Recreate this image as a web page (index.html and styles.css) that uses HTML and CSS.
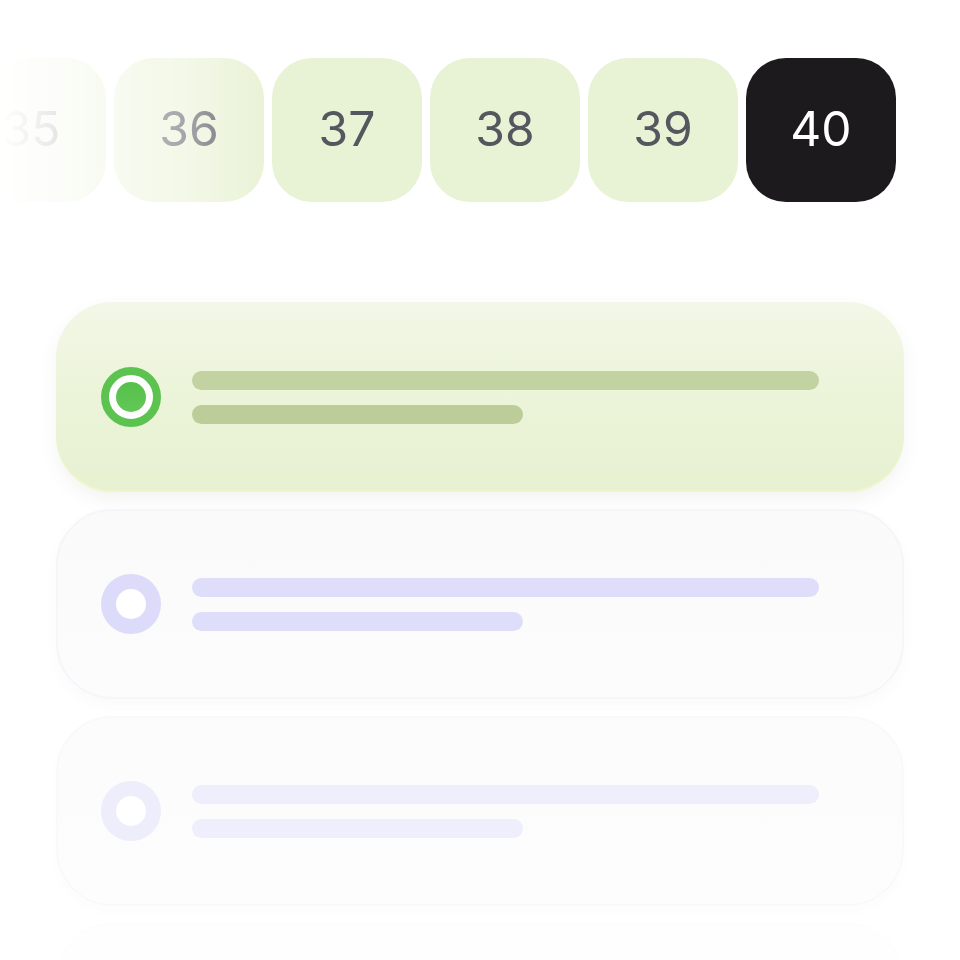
FILE: index.html
```html
<!DOCTYPE html>
<html lang="en">
<head>
<meta charset="utf-8">
<title>Picker</title>
<link rel="stylesheet" href="styles.css">
</head>
<body>
<div class="page">
  <div class="strip">
    <div class="row">
      <div class="tile">35</div>
      <div class="tile">36</div>
      <div class="tile">37</div>
      <div class="tile">38</div>
      <div class="tile">39</div>
      <div class="tile tile-active">40</div>
    </div>
  </div>
  <div class="list">
    <div class="card card-selected">
      <div class="radio radio-on"><span class="dot"></span></div>
      <div class="lines">
        <span class="line line-long"></span>
        <span class="line line-short"></span>
      </div>
    </div>
    <div class="card card-idle">
      <div class="radio radio-off"></div>
      <div class="lines">
        <span class="line line-long"></span>
        <span class="line line-short"></span>
      </div>
    </div>
    <div class="card card-idle card-fade1">
      <div class="radio radio-off"></div>
      <div class="lines">
        <span class="line line-long"></span>
        <span class="line line-short"></span>
      </div>
    </div>
    <div class="card card-idle card-fade2">
      <div class="radio radio-off"></div>
      <div class="lines">
        <span class="line line-long"></span>
        <span class="line line-short"></span>
      </div>
    </div>
  </div>
</div>
</body>
</html>
```

FILE: styles.css
```css
html, body {
  margin: 0;
  padding: 0;
  height: 960px;
  overflow: hidden;
  background: #ffffff;
  font-family: Inter, "Noto Sans", "Liberation Sans", sans-serif;
}

.page {
  width: 960px;
  height: 960px;
  overflow: hidden;
  display: flex;
  flex-direction: column;
}

.strip {
  flex: 0 0 auto;
  width: 960px;
  padding-top: 58px;
  overflow: hidden;
  -webkit-mask-image: linear-gradient(90deg, rgba(0,0,0,0) 0px, rgba(0,0,0,0.12) 50px, rgba(0,0,0,0.35) 120px, rgba(0,0,0,0.55) 190px, #000 275px);
  mask-image: linear-gradient(90deg, rgba(0,0,0,0) 0px, rgba(0,0,0,0.12) 50px, rgba(0,0,0,0.35) 120px, rgba(0,0,0,0.55) 190px, #000 275px);
}

.row {
  display: flex;
  gap: 8px;
  margin-left: -44px;
}

.tile {
  flex: 0 0 150px;
  height: 144px;
  border-radius: 40px;
  background: #e8f2d4;
  color: #55575e;
  font-size: 48px;
  font-weight: 400;
  line-height: 1;
  display: flex;
  align-items: center;
  justify-content: center;
  padding-bottom: 3px;
  box-sizing: border-box;
}

.tile-active {
  background: #1c1a1d;
  color: #ffffff;
}

.list {
  flex: 0 0 auto;
  margin-top: 100px;
  padding: 0 56px;
  display: flex;
  flex-direction: column;
  gap: 17px;
}

.card {
  flex: 0 0 190px;
  height: 190px;
  box-sizing: border-box;
  border-radius: 56px;
  display: flex;
  align-items: center;
  padding-left: 45px;
  gap: 31px;
}

.card-selected {
  background: linear-gradient(180deg, #f3f7e7 0%, #ecf4da 45%, #e7f1d1 100%);
  box-shadow: 0 8px 18px rgba(90, 100, 70, 0.07), inset 0 -2px 0 #eef5c8;
}

.card-idle {
  background: linear-gradient(180deg, #fafafb 0%, #fcfcfd 100%);
  border: 2px solid #f5f5fa;
  box-shadow: 0 6px 14px rgba(80, 80, 120, 0.03);
  padding-left: 43px;
}

.card-fade1 {
  opacity: 0.5;
}

.card-fade2 {
  opacity: 0.15;
}

.radio {
  flex: 0 0 60px;
  width: 60px;
  height: 60px;
  box-sizing: border-box;
  border-radius: 50%;
  display: flex;
  align-items: center;
  justify-content: center;
}

.radio-on {
  background: #ffffff;
  border: 8px solid #5cc351;
}

.dot {
  width: 30px;
  height: 30px;
  border-radius: 50%;
  background: linear-gradient(180deg, #57c04c, #62c756);
}

.radio-off {
  border: 15px solid #dcdcfa;
  background: #ffffff;
}

.lines {
  display: flex;
  flex-direction: column;
  gap: 15px;
}

.line {
  display: block;
  height: 19px;
  border-radius: 10px;
}

.line-long {
  width: 627px;
}

.line-short {
  width: 331px;
}

.card-selected .line-long {
  background: #c2d2a0;
}

.card-selected .line-short {
  background: #bccd99;
}

.card-idle .line {
  background: #dedefb;
}
```
